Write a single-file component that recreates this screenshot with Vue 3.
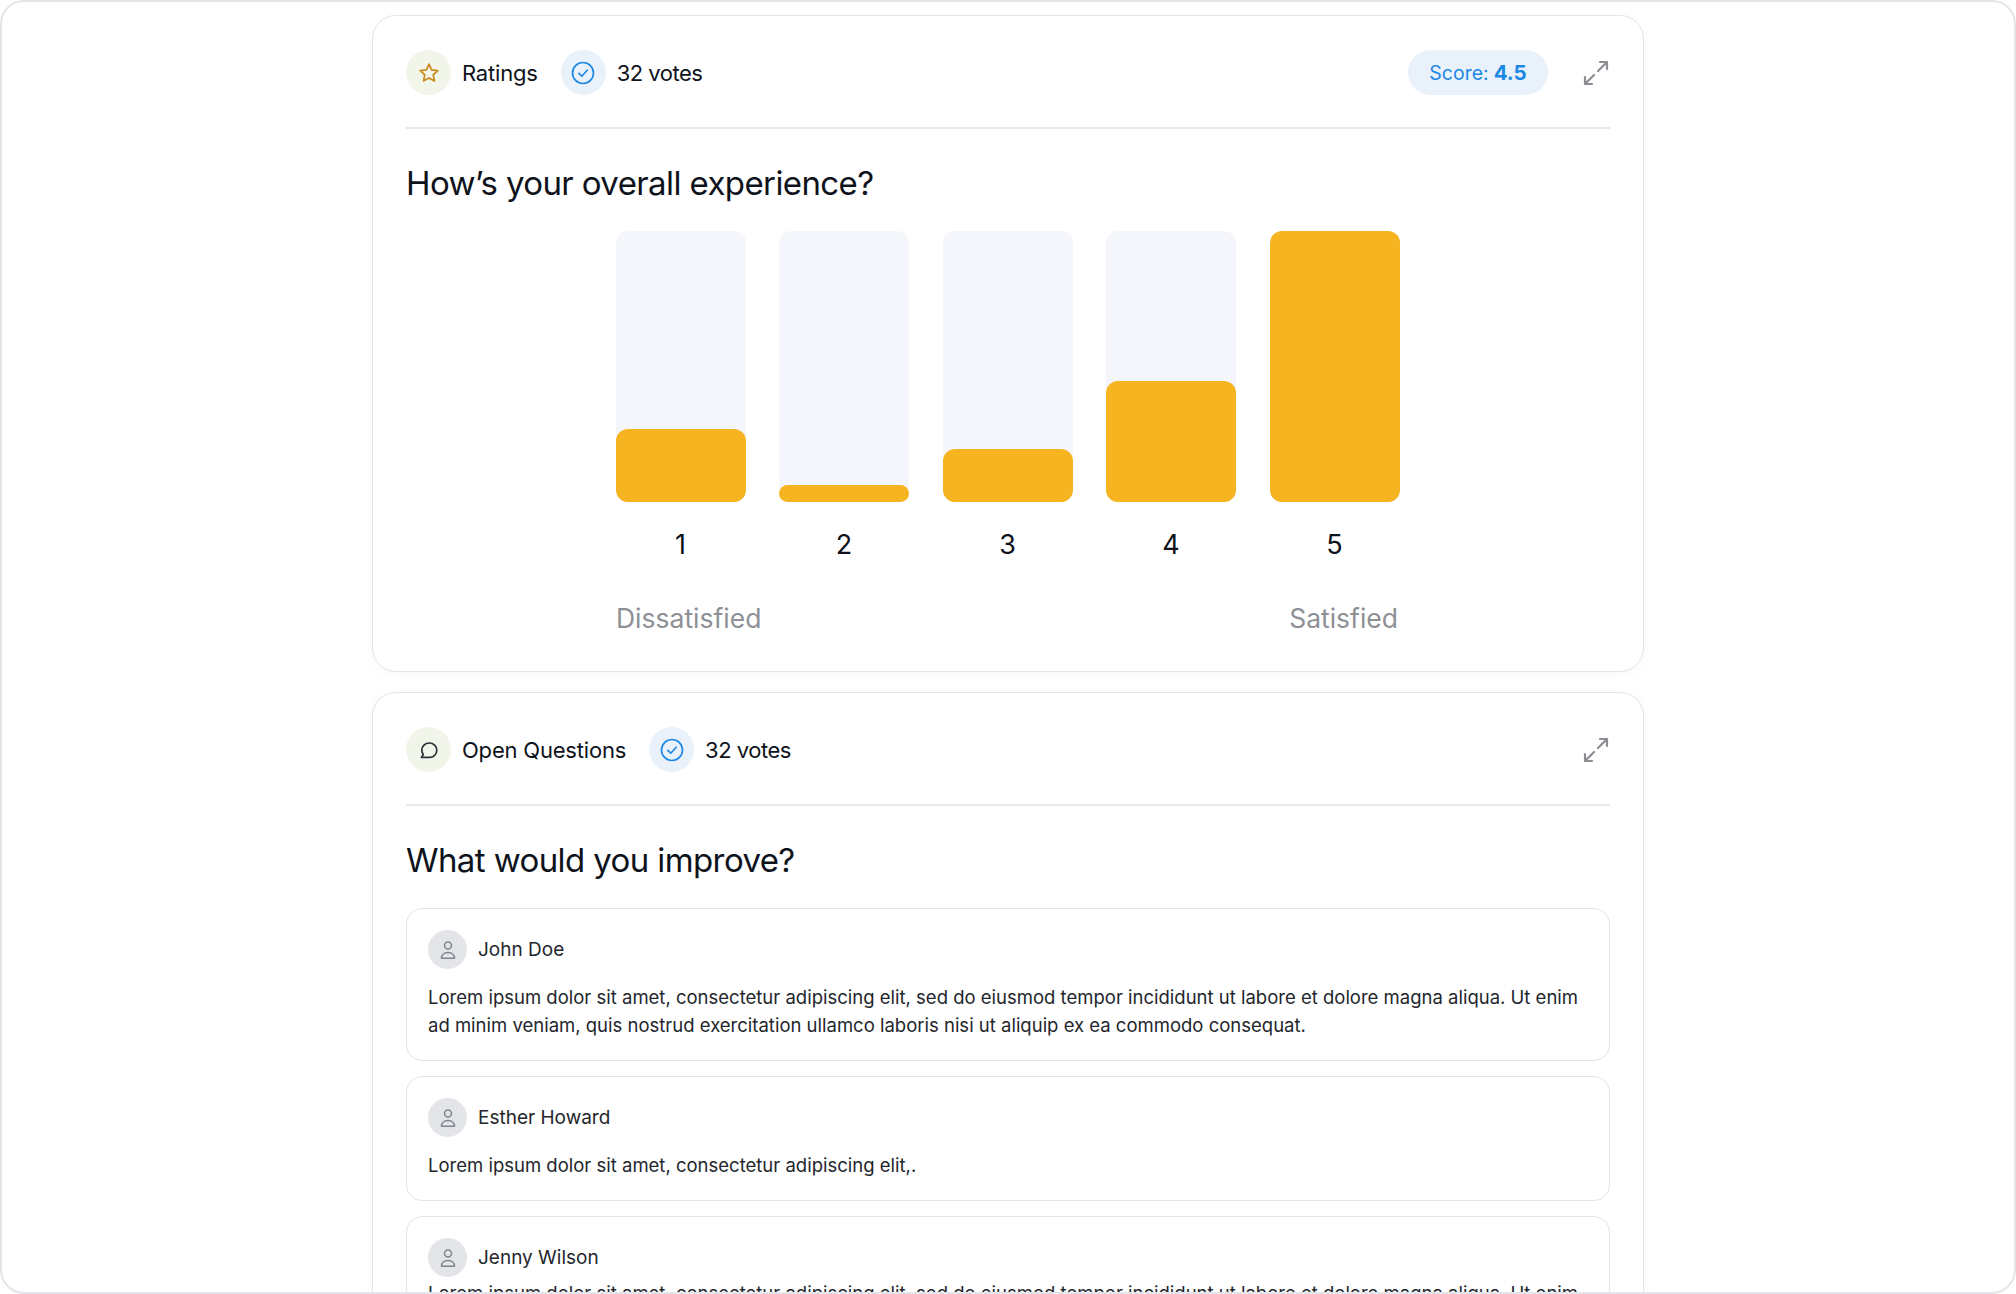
<template>
  <div class="frame">
    <div class="column">
      <section class="card">
        <header class="card-head">
          <span class="tag-icon tag-olive">
            <svg width="24" height="24" viewBox="0 0 24 24" fill="none" stroke="#c98a1b" stroke-width="1.7" stroke-linejoin="round">
              <path d="M12 3.2l2.6 5.7 6.2.7-4.6 4.2 1.3 6.1L12 17l-5.5 2.9 1.3-6.1-4.6-4.2 6.2-.7z" />
            </svg>
          </span>
          <span class="tag-label">Ratings</span>
          <span class="tag-icon tag-blue">
            <svg width="24" height="24" viewBox="0 0 24 24" fill="none" stroke="#1e88e5" stroke-width="1.7" stroke-linecap="round" stroke-linejoin="round">
              <circle cx="12" cy="12" r="10.5" />
              <path d="M7.8 12.4l3 2.8 5.4-6" />
            </svg>
          </span>
          <span class="tag-label votes">32 votes</span>
          <span class="score">Score: <b>4.5</b></span>
          <svg class="expand" width="26" height="26" viewBox="0 0 26 26" fill="none" stroke="#8b8d93" stroke-width="2.2" stroke-linecap="round" stroke-linejoin="round">
            <path d="M15 11l9-9M17 2h7v7M11 15l-9 9M2 17v7h7" />
          </svg>
        </header>
        <h2 class="question">How’s your overall experience?</h2>
        <div class="bars">
          <div v-for="bar in bars" :key="bar.label" class="bar-col">
            <div class="track">
              <div class="fill" :style="{ height: bar.height + 'px' }"></div>
            </div>
            <div class="bar-num">{{ bar.label }}</div>
          </div>
        </div>
        <div class="scale">
          <span>Dissatisfied</span>
          <span>Satisfied</span>
        </div>
      </section>

      <section class="card">
        <header class="card-head">
          <span class="tag-icon tag-olive">
            <svg width="24" height="24" viewBox="0 0 24 24" fill="none" stroke="#2b2f36" stroke-width="1.7" stroke-linecap="round" stroke-linejoin="round">
              <path d="M4.4 19.4h8c4.2 0 7.4-3.2 7.4-7.2S16.500 5 12.300 5 4.800 8.200 4.800 12.200c0 1.700.6 3.200 1.500 4.300z" />
            </svg>
          </span>
          <span class="tag-label">Open Questions</span>
          <span class="tag-icon tag-blue">
            <svg width="24" height="24" viewBox="0 0 24 24" fill="none" stroke="#1e88e5" stroke-width="1.7" stroke-linecap="round" stroke-linejoin="round">
              <circle cx="12" cy="12" r="10.5" />
              <path d="M7.8 12.4l3 2.8 5.4-6" />
            </svg>
          </span>
          <span class="tag-label votes">32 votes</span>
          <svg class="expand push" width="26" height="26" viewBox="0 0 26 26" fill="none" stroke="#8b8d93" stroke-width="2.2" stroke-linecap="round" stroke-linejoin="round">
            <path d="M15 11l9-9M17 2h7v7M11 15l-9 9M2 17v7h7" />
          </svg>
        </header>
        <h2 class="question">What would you improve?</h2>
        <div class="answers">
          <article v-for="answer in answers" :key="answer.name" class="answer" :class="{ tight: answer.tight }">
            <div class="answer-head">
              <span class="avatar">
                <svg width="20" height="20" viewBox="0 0 20 20" fill="none" stroke="#7f838b" stroke-width="1.500">
                  <circle cx="10" cy="5.500" r="3.500" />
                  <path d="M3.500 18.200c0-3.600 2.800-5.700 6.500-5.700s6.500 2.100 6.500 5.700z" stroke-linejoin="round" />
                </svg>
              </span>
              <span class="answer-name">{{ answer.name }}</span>
            </div>
            <p class="answer-text">{{ answer.text }}</p>
          </article>
        </div>
      </section>
    </div>
  </div>
</template>

<script setup>
const lorem = 'Lorem ipsum dolor sit amet, consectetur adipiscing elit, sed do eiusmod tempor incididunt ut labore et dolore magna aliqua. Ut enim ad minim veniam, quis nostrud exercitation ullamco laboris nisi ut aliquip ex ea commodo consequat.'

const bars = [
  { label: '1', height: 73 },
  { label: '2', height: 17 },
  { label: '3', height: 53 },
  { label: '4', height: 121 },
  { label: '5', height: 271 }
]

const answers = [
  { name: 'John Doe', text: lorem },
  { name: 'Esther Howard', text: 'Lorem ipsum dolor sit amet, consectetur adipiscing elit,.' },
  { name: 'Jenny Wilson', text: lorem, tight: true }
]
</script>

<style>
html, body {
  margin: 0;
  background: #fff;
}
</style>

<style scoped>
.frame {
  box-sizing: border-box;
  height: 1294px;
  overflow: hidden;
  background: #fff;
  border: 2px solid #e4e5ea;
  border-radius: 24px;
  font-family: Inter, "Noto Sans", sans-serif;
  color: #0e131b;
}

.column {
  width: 1272px;
  margin: 0 auto;
  padding-top: 13px;
  display: flex;
  flex-direction: column;
  gap: 20px;
}

.card {
  box-sizing: border-box;
  padding: 34px 33px 35px;
  border: 1px solid #e1e4ec;
  border-radius: 24px;
  background: #fff;
  box-shadow: 0 2px 8px rgba(120, 130, 170, 0.06);
}

.card-head {
  display: flex;
  align-items: center;
  height: 45px;
  padding-bottom: 32px;
  border-bottom: 2px solid #e7e8ed;
}

.tag-icon {
  flex: none;
  width: 45px;
  height: 45px;
  border-radius: 50%;
  display: flex;
  align-items: center;
  justify-content: center;
}

.tag-olive {
  background: #f2f5ea;
}

.tag-blue {
  background: #e9f2fa;
}

.tag-label {
  margin-left: 11px;
  margin-right: 23px;
  font-size: 22px;
  letter-spacing: -0.2px;
}

.tag-label.votes {
  letter-spacing: -0.5px;
}

.score {
  margin-left: auto;
  width: 140px;
  height: 45px;
  border-radius: 23px;
  background: #e9f2fa;
  color: #1e88e5;
  font-size: 19.500px;
  display: flex;
  align-items: center;
  justify-content: center;
  gap: 5px;
}

.score b {
  font-size: 20.500px;
  font-weight: 700;
}

.expand {
  margin-left: 35px;
  margin-right: 1px;
  flex: none;
}

.expand.push {
  margin-left: auto;
}

.question {
  margin: 32px 0 26px;
  font-size: 33px;
  line-height: 44px;
  font-weight: 420;
  letter-spacing: -0.6px;
}

.bars {
  display: grid;
  grid-template-columns: repeat(5, 130px);
  justify-content: center;
  column-gap: 33.5px;
  margin-left: -1px;
}

.bar-col {
  display: flex;
  flex-direction: column;
  align-items: center;
}

.track {
  position: relative;
  width: 100%;
  height: 271px;
  border-radius: 12px;
  background: #f5f6fb;
}

.fill {
  position: absolute;
  left: 0;
  right: 0;
  bottom: 0;
  border-radius: 12px;
  background: #f7b421;
}

.bar-num {
  margin-top: 28px;
  font-size: 27px;
  line-height: 30px;
}

.scale {
  display: flex;
  justify-content: space-between;
  width: 782px;
  margin: 40px 0 0 210px;
  color: #8e9095;
  font-size: 26.500px;
  line-height: 36px;
}

.answers {
  display: flex;
  flex-direction: column;
  gap: 15px;
}

.answer {
  box-sizing: border-box;
  padding: 21px;
  border: 1px solid #e1e4ec;
  border-radius: 16px;
}

.answer-head {
  display: flex;
  align-items: center;
  gap: 11px;
}

.avatar {
  flex: none;
  width: 39px;
  height: 39px;
  border-radius: 50%;
  background: #e4e5e9;
  display: flex;
  align-items: center;
  justify-content: center;
}

.answer-name {
  font-size: 19px;
  color: #23262c;
}

.answer-text {
  margin: 14px 0 0;
  font-size: 18.500px;
  line-height: 28px;
  color: #23262c;
}

.tight .answer-text {
  margin-top: 2px;
}
</style>
